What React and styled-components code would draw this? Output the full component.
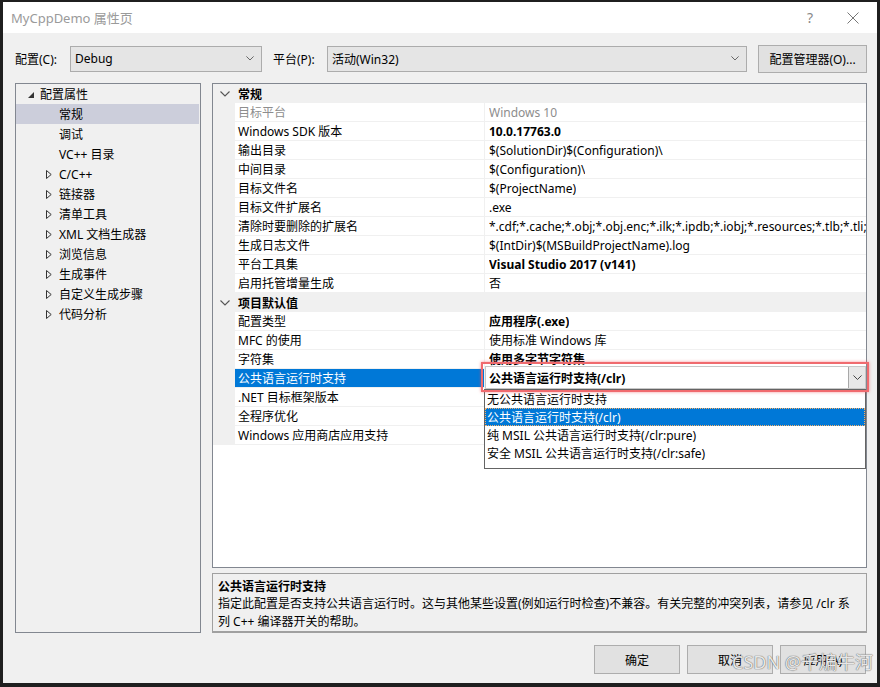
import React from "react";
import styled, { createGlobalStyle } from "styled-components";

const GlobalStyle = createGlobalStyle`
  html, body {
    margin: 0;
    padding: 0;
    background: #1f1f1f;
  }
  body {
    font-family: "Noto Sans", "Noto Sans CJK SC", sans-serif;
    font-size: 12px;
    color: #000;
  }
  * {
    box-sizing: border-box;
  }
`;

const general = [
  { name: "目标平台", value: "Windows 10", disabled: true },
  { name: "Windows SDK 版本", value: "10.0.17763.0", bold: true },
  { name: "输出目录", value: "$(SolutionDir)$(Configuration)\\" },
  { name: "中间目录", value: "$(Configuration)\\" },
  { name: "目标文件名", value: "$(ProjectName)" },
  { name: "目标文件扩展名", value: ".exe" },
  {
    name: "清除时要删除的扩展名",
    value:
      "*.cdf;*.cache;*.obj;*.obj.enc;*.ilk;*.ipdb;*.iobj;*.resources;*.tlb;*.tli;*.tlh;*.tmp;*.rsp",
  },
  { name: "生成日志文件", value: "$(IntDir)$(MSBuildProjectName).log" },
  { name: "平台工具集", value: "Visual Studio 2017 (v141)", bold: true },
  { name: "启用托管增量生成", value: "否" },
];

const defaults = [
  { name: "配置类型", value: "应用程序(.exe)", bold: true },
  { name: "MFC 的使用", value: "使用标准 Windows 库" },
  { name: "字符集", value: "使用多字节字符集", bold: true },
  { name: "公共语言运行时支持", value: "", selected: true },
  { name: ".NET 目标框架版本", value: "" },
  { name: "全程序优化", value: "" },
  { name: "Windows 应用商店应用支持", value: "" },
];

const treeItems = [
  { label: "常规", selected: true },
  { label: "调试" },
  { label: "VC++ 目录" },
  { label: "C/C++", arrow: true },
  { label: "链接器", arrow: true },
  { label: "清单工具", arrow: true },
  { label: "XML 文档生成器", arrow: true },
  { label: "浏览信息", arrow: true },
  { label: "生成事件", arrow: true },
  { label: "自定义生成步骤", arrow: true },
  { label: "代码分析", arrow: true },
];

const clrOptions = [
  "无公共语言运行时支持",
  "公共语言运行时支持(/clr)",
  "纯 MSIL 公共语言运行时支持(/clr:pure)",
  "安全 MSIL 公共语言运行时支持(/clr:safe)",
];

const Chevron = ({ color = "#444", size = 9 }) => (
  <svg width={size} height={size * 0.6} viewBox="0 0 10 6">
    <path d="M0.5 0.5 L5 5 L9.5 0.5" fill="none" stroke={color} strokeWidth="1.1" />
  </svg>
);

const App = () => {
  return (
    <>
      <GlobalStyle />
      <Frame>
        <Window>
          <TitleBar>
            <TitleText>MyCppDemo 属性页</TitleText>
            <TitleButtons>
              <HelpMark>?</HelpMark>
              <svg width="12" height="12" viewBox="0 0 12 12">
                <path d="M0.5 0.5 L11.5 11.5 M11.5 0.5 L0.5 11.5" stroke="#777" strokeWidth="1" />
              </svg>
            </TitleButtons>
          </TitleBar>
          <Body>
            <Toolbar>
              <FieldLabel width="55px">配置(C):</FieldLabel>
              <Select width="192px">
                <span>Debug</span>
                <Chevron color="#555" size={8} />
              </Select>
              <FieldLabel width="54px">平台(P):</FieldLabel>
              <Select width="420px">
                <span>活动(Win32)</span>
                <Chevron color="#555" size={8} />
              </Select>
              <Button width="109px" height="28px">配置管理器(O)...</Button>
            </Toolbar>
            <Main>
              <Tree>
                <TreeRow>
                  <FilledArrow />
                  <span>配置属性</span>
                </TreeRow>
                {treeItems.map(item => (
                  <TreeRow key={item.label} child selected={item.selected}>
                    <ArrowSlot>
                      {item.arrow && (
                        <svg width="6" height="9" viewBox="0 0 6 9">
                          <path d="M0.5 0.5 L5.2 4.5 L0.5 8.5 Z" fill="none" stroke="#333" strokeWidth="1" />
                        </svg>
                      )}
                    </ArrowSlot>
                    <span>{item.label}</span>
                  </TreeRow>
                ))}
              </Tree>
              <RightCol>
                <Grid>
                  <Section title="常规" rows={general} />
                  <Section title="项目默认值" rows={defaults} />
                </Grid>
                <Description>
                  <DescTitle>公共语言运行时支持</DescTitle>
                  <DescText>
                    指定此配置是否支持公共语言运行时。这与其他某些设置(例如运行时检查)不兼容。有关完整的冲突列表，请参见 /clr 系
                    <br />
                    列 C++ 编译器开关的帮助。
                  </DescText>
                </Description>
              </RightCol>
            </Main>
            <Footer>
              <Button width="86px" height="29px">确定</Button>
              <Button width="86px" height="29px">取消</Button>
              <Button width="86px" height="29px">应用(A)</Button>
              <Watermark>CSDN @千煸牛河</Watermark>
            </Footer>
          </Body>
        </Window>
      </Frame>
    </>
  );
};

const Section = ({ title, rows }) => (
  <>
    <SectionHeader>
      <Gutter>
        <Chevron color="#555" size={10} />
      </Gutter>
      <SectionTitle>{title}</SectionTitle>
    </SectionHeader>
    {rows.map(row => (
      <PropRow key={row.name}>
        <Gutter />
        <NameCell selected={row.selected} disabled={row.disabled}>
          {row.name}
        </NameCell>
        <ValueCell bold={row.bold} disabled={row.disabled}>
          <ValueText>{row.value}</ValueText>
          {row.selected && (
            <>
              <DropList>
                {clrOptions.map((opt, i) => (
                  <DropItem key={opt} selected={i === 1}>
                    {opt}
                  </DropItem>
                ))}
              </DropList>
              <Highlight>
                <Combo>
                  <span>公共语言运行时支持(/clr)</span>
                  <ComboButton>
                    <Chevron color="#444" size={9} />
                  </ComboButton>
                </Combo>
              </Highlight>
            </>
          )}
        </ValueCell>
      </PropRow>
    ))}
  </>
);

export default App;

const Frame = styled.div`
  width: 880px;
  height: 687px;
  padding: 2px 3px 4px 3px;
  background: #1f1f1f;
`;

const Window = styled.div`
  height: 100%;
  display: flex;
  flex-direction: column;
  background: #f0f0f0;
`;

const TitleBar = styled.div`
  height: 31px;
  flex-shrink: 0;
  background: #fff;
  display: flex;
  align-items: center;
  justify-content: space-between;
  padding: 0 18px 0 8px;
`;

const TitleText = styled.span`
  font-size: 13px;
  color: #9a9a9a;
`;

const TitleButtons = styled.div`
  display: flex;
  align-items: center;
  gap: 34px;
`;

const HelpMark = styled.span`
  font-size: 14px;
  color: #888;
`;

const Body = styled.div`
  flex: 1;
  display: flex;
  flex-direction: column;
  padding: 0 10px 0 12px;
  position: relative;
`;

const Toolbar = styled.div`
  height: 50px;
  flex-shrink: 0;
  display: flex;
  align-items: center;
  padding-top: 1px;
`;

const FieldLabel = styled.span`
  width: ${props => props.width};
  flex-shrink: 0;
  white-space: nowrap;
`;

const Select = styled.div`
  width: ${props => props.width};
  flex-shrink: 0;
  height: 26px;
  background: #e5e5e5;
  border: 1px solid #acacac;
  display: flex;
  align-items: center;
  justify-content: space-between;
  padding: 0 7px 0 4px;
  margin-right: 11px;
`;

const Button = styled.div`
  width: ${props => props.width};
  height: ${props => props.height};
  flex-shrink: 0;
  background: #e1e1e1;
  border: 1px solid #adadad;
  display: flex;
  align-items: center;
  justify-content: center;
  white-space: nowrap;
`;

const Main = styled.div`
  height: 550px;
  flex-shrink: 0;
  display: flex;
  gap: 11px;
`;

const Tree = styled.div`
  width: 186px;
  flex-shrink: 0;
  border: 1px solid #828790;
`;

const TreeRow = styled.div`
  height: 20px;
  display: flex;
  align-items: center;
  padding-left: ${props => (props.child ? "30px" : "12px")};
  background: ${props => (props.selected ? "#cccedb" : "transparent")};
  margin-right: 1px;
  white-space: nowrap;
`;

const FilledArrow = styled.span`
  width: 0;
  height: 0;
  border-left: 6px solid transparent;
  border-bottom: 6px solid #333;
  margin-right: 6px;
  margin-top: 2px;
`;

const ArrowSlot = styled.span`
  width: 13px;
  display: flex;
  align-items: center;
`;

const RightCol = styled.div`
  flex: 1;
  min-width: 0;
  display: flex;
  flex-direction: column;
  gap: 5px;
`;

const Grid = styled.div`
  height: 485px;
  flex-shrink: 0;
  border: 1px solid #828790;
  background: #fff;
  display: flex;
  flex-direction: column;
`;

const SectionHeader = styled.div`
  height: 19px;
  display: flex;
  background: #f0f0f0;
  flex-shrink: 0;
`;

const Gutter = styled.div`
  width: 22px;
  flex-shrink: 0;
  background: #f0f0f0;
  display: flex;
  align-items: center;
  justify-content: center;
  padding-left: 2px;
`;

const SectionTitle = styled.span`
  font-weight: bold;
  padding-left: 3px;
  display: flex;
  align-items: center;
`;

const PropRow = styled.div`
  height: 19px;
  display: flex;
  flex-shrink: 0;
`;

const NameCell = styled.div`
  width: 250px;
  flex-shrink: 0;
  display: flex;
  align-items: center;
  padding-left: 3px;
  border-bottom: 1px solid #f0f0f0;
  border-right: 1px solid #f0f0f0;
  white-space: nowrap;
  background: ${props => (props.selected ? "#0078d7" : "#fff")};
  color: ${props => (props.selected ? "#fff" : props.disabled ? "#8d8d8d" : "#000")};
`;

const ValueCell = styled.div`
  flex: 1;
  min-width: 0;
  position: relative;
  display: flex;
  align-items: center;
  padding-left: 4px;
  border-bottom: 1px solid #f0f0f0;
  font-weight: ${props => (props.bold ? "bold" : "normal")};
  color: ${props => (props.disabled ? "#8d8d8d" : "#000")};
`;

const ValueText = styled.span`
  white-space: nowrap;
  overflow: hidden;
  min-width: 0;
`;

const Highlight = styled.div`
  position: absolute;
  left: -4px;
  top: -7px;
  width: 388px;
  height: 30px;
  border: 2px solid #f06b6f;
  box-shadow: 0 0 3px rgba(240, 80, 90, 0.6);
  padding: 2px 1px 1px 2px;
  z-index: 3;
`;

const Combo = styled.div`
  height: 100%;
  background: #fff;
  border: 1px solid #c8c8c8;
  display: flex;
  align-items: center;
  justify-content: space-between;
  padding-left: 3px;
  font-weight: bold;
  color: #000;
  white-space: nowrap;
`;

const ComboButton = styled.div`
  width: 17px;
  height: 100%;
  background: #e8e8e8;
  border-left: 1px solid #a8a8a8;
  display: flex;
  align-items: center;
  justify-content: center;
`;

const DropList = styled.div`
  position: absolute;
  left: -1px;
  top: 20px;
  width: 382px;
  height: 80px;
  background: #fff;
  border: 1px solid #646464;
  z-index: 2;
  font-weight: normal;
  white-space: nowrap;
`;

const DropItem = styled.div`
  height: 18px;
  display: flex;
  align-items: center;
  padding-left: 2px;
  background: ${props => (props.selected ? "#0078d7" : "#fff")};
  color: ${props => (props.selected ? "#fff" : "#000")};
  outline: ${props => (props.selected ? "1px dotted #f5b06a" : "none")};
  outline-offset: -1px;
`;

const Description = styled.div`
  height: 60px;
  flex-shrink: 0;
  border: 1px solid #a0a0a0;
  border-bottom-width: 2px;
  background: #f0f0f0;
  padding: 4px 5px;
`;

const DescTitle = styled.div`
  font-weight: bold;
  line-height: 17px;
`;

const DescText = styled.div`
  line-height: 18px;
  white-space: nowrap;
`;

const Footer = styled.div`
  height: 50px;
  flex-shrink: 0;
  display: flex;
  align-items: flex-end;
  justify-content: flex-end;
  gap: 7px;
  padding-bottom: 9px;
  padding-right: 1px;
  position: relative;
`;

const Watermark = styled.span`
  position: absolute;
  right: -6px;
  bottom: 9px;
  font-size: 18px;
  color: rgba(255, 255, 255, 0.85);
  text-shadow: 0 0 1px #666, 0 0 1px #666;
  white-space: nowrap;
  pointer-events: none;
`;
